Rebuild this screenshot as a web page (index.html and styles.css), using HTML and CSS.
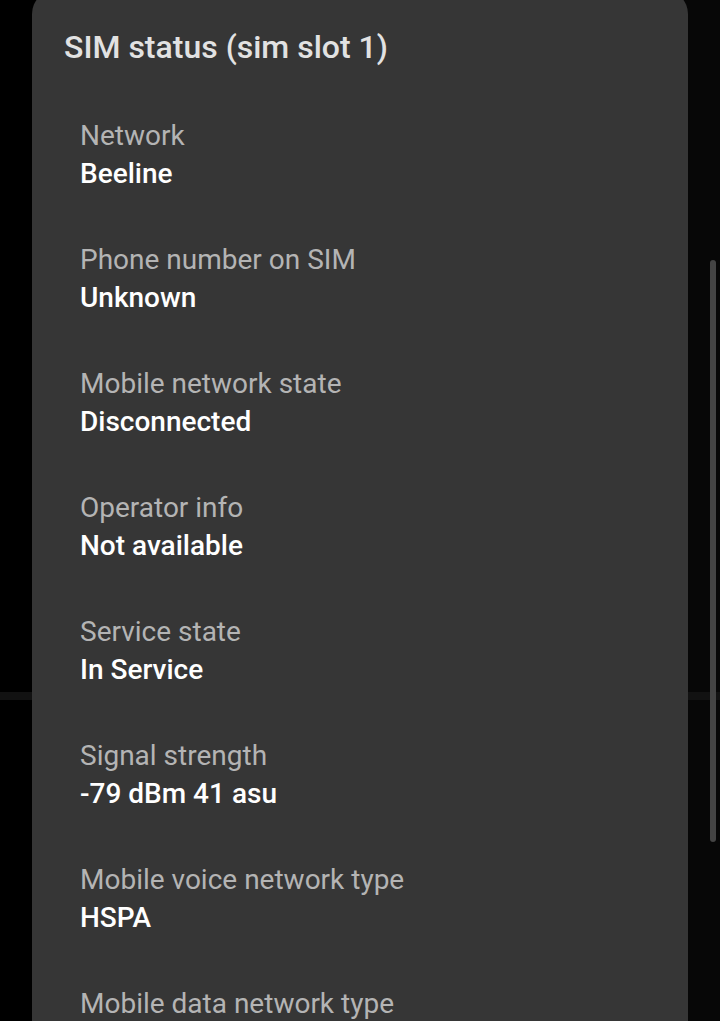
FILE: index.html
```html
<!DOCTYPE html>
<html>
<head>
<meta charset="utf-8">
<link rel="stylesheet" href="styles.css">
</head>
<body>
<div class="dialog">
  <h1 class="title">SIM status (sim slot 1)</h1>
  <div class="list">
    <div class="item"><div class="label">Network</div><div class="value">Beeline</div></div>
    <div class="item"><div class="label">Phone number on SIM</div><div class="value">Unknown</div></div>
    <div class="item"><div class="label">Mobile network state</div><div class="value">Disconnected</div></div>
    <div class="item"><div class="label">Operator info</div><div class="value">Not available</div></div>
    <div class="item"><div class="label">Service state</div><div class="value">In Service</div></div>
    <div class="item"><div class="label">Signal strength</div><div class="value">-79 dBm 41 asu</div></div>
    <div class="item"><div class="label">Mobile voice network type</div><div class="value">HSPA</div></div>
    <div class="item"><div class="label">Mobile data network type</div><div class="value">HSPA</div></div>
  </div>
</div>
<div class="scrollbar"></div>
</body>
</html>
```
FILE: styles.css
```css
html, body {
  margin: 0;
  padding: 0;
  height: 1021px;
  overflow: hidden;
}
body {
  font-family: Roboto, "Liberation Sans", sans-serif;
  background:
    linear-gradient(#121212, #121212) 0 692px / 100% 8px no-repeat,
    linear-gradient(to right, #000 50%, #070707 50%);
  position: relative;
}
.dialog {
  margin: -10px 32px 0 32px;
  background: #363636;
  border-radius: 24px;
  padding-top: 37px;
  height: 1100px;
}
.title {
  margin: 0;
  padding-left: 32px;
  font-size: 32px;
  line-height: 40px;
  font-weight: 500;
  color: #e2e2e2;
}
.list {
  padding-top: 50px;
  padding-left: 48px;
  display: flex;
  flex-direction: column;
  gap: 48px;
}
.label {
  font-size: 28px;
  line-height: 38px;
  color: #b4b4b4;
}
.value {
  font-size: 28px;
  line-height: 38px;
  font-weight: 500;
  color: #ffffff;
}
.scrollbar {
  position: absolute;
  left: 710px;
  top: 260px;
  width: 6px;
  height: 582px;
  border-radius: 3px;
  background: #444444;
}
```
